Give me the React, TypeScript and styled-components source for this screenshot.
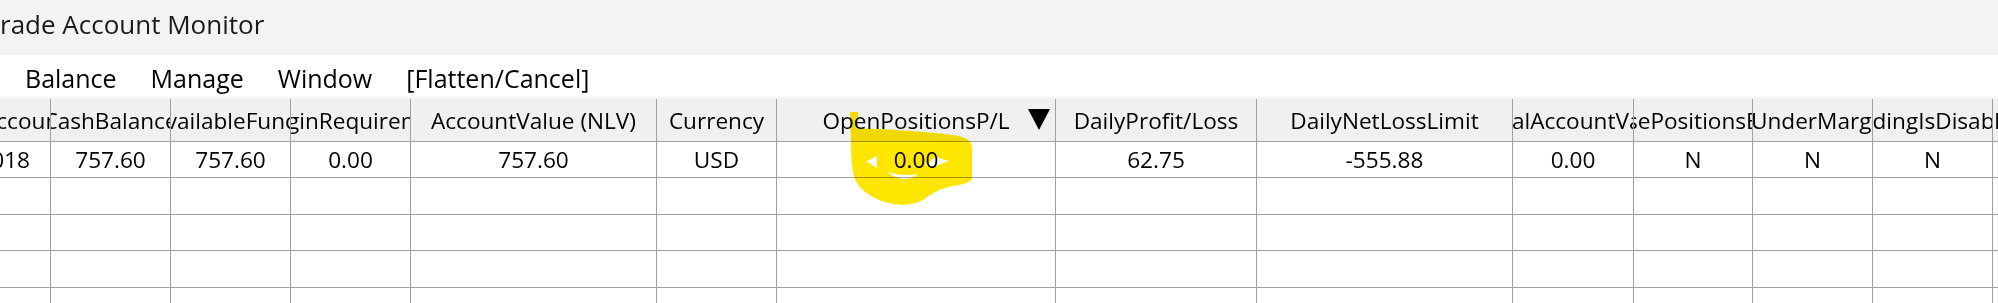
import styled, { createGlobalStyle } from "styled-components";

const GlobalStyle = createGlobalStyle`
  html, body {
    margin: 0;
    padding: 0;
    background: #fff;
  }
  body {
    width: 1998px;
    height: 303px;
    overflow: hidden;
    font-family: "Open Sans", "Noto Sans", sans-serif;
    color: #000;
  }
`;

const Window = styled.div`
  position: relative;
  width: 1998px;
  height: 303px;
  overflow: hidden;
  display: flex;
  flex-direction: column;
`;

const TitleBar = styled.div`
  height: 55px;
  flex: none;
  box-sizing: border-box;
  padding-bottom: 8px;
  background: #f3f3f3;
  display: flex;
  align-items: center;
  font-size: 26px;
  color: #1b1b1b;
  white-space: nowrap;
`;

const MenuBar = styled.div`
  height: 42px;
  flex: none;
  box-sizing: border-box;
  padding: 4px 0 0 8px;
  display: flex;
  align-items: center;
  font-size: 25px;
  background: #fff;
`;

const MenuItem = styled.span`
  padding: 0 17px;
  white-space: nowrap;
`;

const GridViewport = styled.div`
  flex: 1;
  overflow: hidden;
  border-top: 2px solid #f5f5f5;
`;

const Grid = styled.div`
  margin-left: -20px;
  display: flex;
  flex-direction: column;
  width: max-content;
`;

const Row = styled.div<{ $header?: boolean }>`
  display: flex;
  flex: none;
  box-sizing: border-box;
  height: ${(p) => (p.$header ? "43px" : "36.4px")};
  border-bottom: 1px solid #a0a0a0;
  background: ${(p) => (p.$header ? "#f0f0f0" : "#fff")};
`;

const Cell = styled.div<{ $w: number; $align?: "start" | "end" | "center"; $pad?: number }>`
  position: relative;
  flex: none;
  width: ${(p) => p.$w}px;
  box-sizing: border-box;
  border-right: 1px solid #a0a0a0;
  display: flex;
  align-items: center;
  justify-content: ${(p) =>
    p.$align === "start" ? "flex-start" : p.$align === "end" ? "flex-end" : "center"};
  padding: 0 ${(p) => p.$pad ?? 0}px;
  overflow: hidden;
  white-space: nowrap;
  font-size: 22.6px;
`;

const Label = styled.span`
  flex: none;
`;

const SortGlyph = styled.svg`
  position: absolute;
  right: 5px;
  top: 10px;
  width: 22px;
  height: 21px;
`;

const Highlight = styled.svg`
  position: absolute;
  left: 845px;
  top: 108px;
  width: 135px;
  height: 102px;
  mix-blend-mode: multiply;
  pointer-events: none;
`;

type Column = {
  title: string;
  width: number;
  align?: "start" | "end" | "center";
  pad?: number;
  sorted?: boolean;
};

const columns: Column[] = [
  { title: "AccountId", width: 71, align: "start", pad: 2 },
  { title: "CashBalance", width: 120 },
  { title: "AvailableFunds", width: 120 },
  { title: "MarginRequirement", width: 120 },
  { title: "AccountValue (NLV)", width: 246 },
  { title: "Currency", width: 120 },
  { title: "OpenPositionsP/L", width: 279, sorted: true },
  { title: "DailyProfit/Loss", width: 201 },
  { title: "DailyNetLossLimit", width: 256 },
  { title: "InitialAccountValue", width: 121 },
  { title: "ClosePositionsEOD", width: 119 },
  { title: "IsUnderMargin", width: 120 },
  { title: "TradingIsDisabled", width: 120 },
  { title: "DailyLossLimitHit", width: 120, align: "start", pad: 1 },
];

const rows: string[][] = [
  ["85018", "757.60", "757.60", "0.00", "757.60", "USD", "0.00", "62.75", "-555.88", "0.00", "N", "N", "N", ""],
  [],
  [],
  [],
  [],
];

const menu = ["Balance", "Manage", "Window", "[Flatten/Cancel]"];

export default function App() {
  return (
    <Window>
      <GlobalStyle />
      <TitleBar>rade Account Monitor</TitleBar>
      <MenuBar>
        {menu.map((m) => (
          <MenuItem key={m}>{m}</MenuItem>
        ))}
      </MenuBar>
      <GridViewport>
        <Grid>
          <Row $header>
            {columns.map((c) => (
              <Cell key={c.title} $w={c.width} $align={c.align} $pad={c.pad}>
                <Label>{c.title}</Label>
                {c.sorted && (
                  <SortGlyph viewBox="0 0 22 21">
                    <polygon points="0,0 22,0 11,21" fill="#000" />
                  </SortGlyph>
                )}
              </Cell>
            ))}
          </Row>
          {rows.map((r, i) => (
            <Row key={i}>
              {columns.map((c, j) => (
                <Cell
                  key={c.title}
                  $w={c.width}
                  $align={j === 0 ? "end" : c.align}
                  $pad={j === 0 ? 20 : c.pad}
                >
                  <Label>{r[j] ?? ""}</Label>
                </Cell>
              ))}
            </Row>
          ))}
        </Grid>
      </GridViewport>
      <Highlight viewBox="845 108 135 102">
        <path
          d="M850,112 L858,112 L858,128 C880,129 920,131 953,135 C965,137 972,140 972,148 L972,178 C971,182 966,184 953,186 C942,188 934,192 926,198 C918,204 905,206 893,204 C878,201 864,194 857,183 C852,174 851,160 851,140 Z"
          fill="#ffe600"
        />
        <polygon points="866.5,161.5 877,156 877,168" fill="#fff" />
        <polygon points="935,157 949,161 936,166 926,166" fill="#fff" />
        <path d="M888,172 C896,175 910,176 918,174 C914,178 908,179 903,179 C897,178 892,176 888,172 Z" fill="#fff" />
      </Highlight>
    </Window>
  );
}
